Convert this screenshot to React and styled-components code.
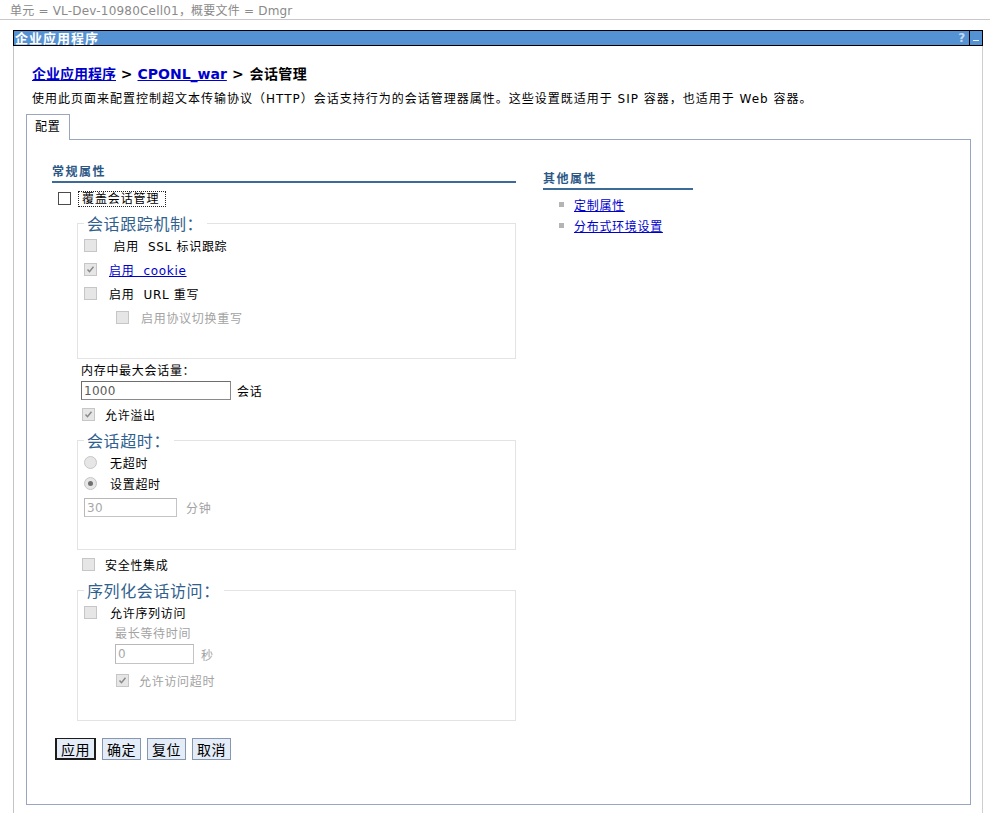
import React from 'react'
import styled, { createGlobalStyle } from 'styled-components'

const GlobalStyle = createGlobalStyle`
  body {
    margin: 0;
    background: #fff;
    color: #000;
    font-family: "DejaVu Sans", "Noto Sans CJK SC", sans-serif;
    font-size: 12px;
    letter-spacing: 0.7px;
  }
`

const TopInfo = styled.div`
  height: 16px;
  padding-top: 3px;
  line-height: 16px;
  padding-left: 10px;
  margin-right: 2px;
  color: #8a8a8a;
  letter-spacing: 0.2px;
  border-bottom: 1px solid #c8c8c8;
`

const Portlet = styled.div`
  margin: 10px 0 0 13px;
  width: 970px;
`

const TitleBar = styled.div`
  display: flex;
  align-items: stretch;
  height: 14px;
  border: 1px solid #000;
  background: #5592d3;
`

const TitleText = styled.div`
  flex: 1;
  padding-left: 1px;
  color: #fff;
  font-size: 13px;
  font-weight: bold;
  letter-spacing: 1px;
  line-height: 14px;
  font-family: "Noto Sans CJK SC", sans-serif;
`

const HelpMark = styled.div`
  width: 12px;
  color: #c6d8ee;
  font-weight: bold;
  line-height: 14px;
  text-align: center;
  margin-right: 1px;
`

const MinBox = styled.div`
  width: 12px;
  border-left: 1px solid #000;
  display: flex;
  align-items: center;
  justify-content: center;
  &::after {
    content: '';
    width: 6px;
    height: 1px;
    background: #e8f0fa;
    margin-top: 4px;
  }
`

const Body = styled.div`
  border-left: 1px solid #c4c4c4;
  border-right: 1px solid #cfcfcf;
  padding: 19px 11px 8px 12px;
`

const Crumbs = styled.div`
  padding-left: 6px;
  font-size: 14px;
  font-weight: bold;
  line-height: 18px;
  letter-spacing: 0;
  font-family: "DejaVu Sans", "Noto Sans CJK SC", sans-serif;
`

const A = styled.a`
  color: #0000cc;
  text-decoration: underline;
  cursor: pointer;
`

const CrumbTail = styled.span`
  letter-spacing: 0.4px;
`

const Desc = styled.div`
  padding-left: 6px;
  margin-top: 8px;
  line-height: 16px;
  letter-spacing: 1px;
`

const TabRow = styled.div`
  display: flex;
  margin-top: 7px;
`

const Tab = styled.div`
  height: 25px;
  line-height: 24px;
  padding: 0 9px 0 8px;
  border: 1px solid #9aa5bf;
  border-bottom: none;
  background: #fff;
  margin-bottom: -1px;
  position: relative;
  z-index: 1;
`

const Panel = styled.div`
  box-sizing: border-box;
  height: 666px;
  border: 1px solid #9aa5bf;
  padding: 24px 0 0 25px;
  display: grid;
  grid-template-columns: 464px 150px;
  column-gap: 27px;
  align-items: start;
`

const Column = styled.div`
  display: flex;
  flex-direction: column;
  margin-top: ${p => p.$offset || 0}px;
`

const SectionHead = styled.div`
  color: #2c5886;
  font-weight: bold;
  letter-spacing: 1.5px;
  line-height: 14px;
  padding-bottom: 3px;
  border-bottom: 2px solid #3d6b97;
  font-family: "Noto Sans CJK SC", sans-serif;
`

const LinkList = styled.ul`
  list-style: none;
  margin: 4px 0 0;
  padding: 0;
`

const LinkItem = styled.li`
  display: flex;
  align-items: center;
  height: 21px;
  padding-left: 16px;
  &::before {
    content: '';
    width: 5px;
    height: 5px;
    background: #b4b4b4;
    margin-right: 10px;
  }
`

const Row = styled.div`
  display: flex;
  align-items: center;
  height: ${p => p.$h || 20}px;
  margin-top: ${p => p.$mt || 0}px;
  padding-left: ${p => p.$indent || 0}px;
  gap: ${p => p.$gap || 12}px;
  color: ${p => (p.$muted ? '#a3a3a3' : '#000')};
  white-space: pre;
`

const Box = styled.span`
  box-sizing: border-box;
  width: 13px;
  height: 13px;
  flex: none;
  display: inline-flex;
  align-items: center;
  justify-content: center;
  border: 1px solid ${p => (p.$enabled ? '#4b4b4b' : '#c6c6c6')};
  background: ${p => (p.$enabled ? '#fff' : '#e6e6e6')};
  border-radius: ${p => (p.$round ? '50%' : '0')};
`

const Dot = styled.span`
  width: 5px;
  height: 5px;
  border-radius: 50%;
  background: #707070;
`

const Focused = styled.span`
  border: 1px dotted #222;
  padding: 0 6px 0 3px;
  line-height: 14px;
  letter-spacing: 0.9px;
`

const Field = styled.fieldset`
  margin: 7px 0 0 25px;
  padding: 0 6px ${p => p.$pb}px 6px;
  border: 1px solid #e3e3e3;
  min-width: 0;
`

const Legend = styled.legend`
  padding: 0 4px 0 3px;
  color: #30618e;
  font-size: 16px;
  line-height: 18px;
  letter-spacing: 0.6px;
  font-family: "Noto Sans CJK SC", sans-serif;
`

const Label = styled.div`
  line-height: 16px;
  margin-top: ${p => p.$mt || 0}px;
  padding-left: ${p => p.$indent || 0}px;
  color: ${p => (p.$muted ? '#a3a3a3' : '#000')};
`

const InputRow = styled.div`
  display: flex;
  align-items: center;
  gap: ${p => p.$gap || 6}px;
  margin-top: ${p => p.$mt || 0}px;
  padding-left: ${p => p.$indent || 0}px;
  color: ${p => (p.$muted ? '#a3a3a3' : '#000')};
`

const TextBox = styled.input`
  box-sizing: border-box;
  width: ${p => p.$w}px;
  height: ${p => p.$h || 19}px;
  margin: 0;
  padding: 0 2px;
  font: inherit;
  font-size: 12px;
  letter-spacing: 0.3px;
  color: ${p => (p.disabled ? '#a8a8a8' : '#5a5a5a')};
  background: #fff;
  border: 1px solid ${p => (p.disabled ? '#c4c4c4' : '#8a8a8a')};
  border-top-color: ${p => (p.disabled ? '#b8b8b8' : '#6e6e6e')};
  border-left-color: ${p => (p.disabled ? '#b8b8b8' : '#6e6e6e')};
`

const Buttons = styled.div`
  display: flex;
  gap: 6px;
  margin: 17px 0 0 3px;
`

const Button = styled.button`
  box-sizing: border-box;
  height: 22px;
  padding: 0 4px;
  margin: 0;
  font-family: "Noto Sans CJK SC", sans-serif;
  font-size: 14px;
  line-height: 18px;
  letter-spacing: 0.5px;
  color: #000;
  background: #e4ecf7;
  border: ${p => (p.$primary ? '2px solid #1c1c1c' : '1px solid #8797b0')};
  border-top-width: 1px;
`

const Check = ({ checked, enabled, round }) => (
  <Box $enabled={enabled} $round={round}>
    {checked && !round && (
      <svg width="9" height="9" viewBox="0 0 9 9">
        <path d="M1.5 4.5 L3.5 6.7 L7.5 1.8" fill="none" stroke="#8a8a8a" strokeWidth="1.5" />
      </svg>
    )}
    {checked && round && <Dot />}
  </Box>
)

export default function App() {
  return (
    <>
      <GlobalStyle />
      <TopInfo>单元 = VL-Dev-10980Cell01，概要文件 = Dmgr</TopInfo>
      <Portlet>
        <TitleBar>
          <TitleText>企业应用程序</TitleText>
          <HelpMark>?</HelpMark>
          <MinBox />
        </TitleBar>
        <Body>
          <Crumbs>
            <A>企业应用程序</A>{'  > '}<A>CPONL_war</A><CrumbTail>{' > 会话管理'}</CrumbTail>
          </Crumbs>
          <Desc>使用此页面来配置控制超文本传输协议（HTTP）会话支持行为的会话管理器属性。这些设置既适用于 SIP 容器，也适用于 Web 容器。</Desc>
          <TabRow>
            <Tab>配置</Tab>
          </TabRow>
          <Panel>
            <Column>
              <SectionHead>常规属性</SectionHead>
              <Row $h={17} $mt={7} $indent={6} $gap={7}>
                <Check enabled />
                <Focused>覆盖会话管理</Focused>
              </Row>

              <Field $pb={29}>
                <Legend>会话跟踪机制：</Legend>
                <Row $h={24} $mt={1}>
                  <Check />
                  <span> 启用  SSL 标识跟踪</span>
                </Row>
                <Row $h={24}>
                  <Check checked />
                  <A>启用  cookie</A>
                </Row>
                <Row $h={24}>
                  <Check />
                  <span>启用  URL 重写</span>
                </Row>
                <Row $h={24} $indent={32} $muted>
                  <Check />
                  <span>启用协议切换重写</span>
                </Row>
              </Field>

              <Label $mt={4} $indent={29}>内存中最大会话量：</Label>
              <InputRow $mt={2} $indent={29}>
                <TextBox $w={150} defaultValue="1000" />
                <span>会话</span>
              </InputRow>
              <Row $mt={4} $indent={30} $gap={10}>
                <Check checked />
                <span>允许溢出</span>
              </Row>

              <Field $pb={32}>
                <Legend>会话超时：</Legend>
                <Row $h={21} $mt={3} $gap={13}>
                  <Check round />
                  <span>无超时</span>
                </Row>
                <Row $h={21} $gap={13}>
                  <Check round checked />
                  <span>设置超时</span>
                </Row>
                <InputRow $mt={4} $gap={9} $muted>
                  <TextBox $w={93} defaultValue="30" disabled />
                  <span>分钟</span>
                </InputRow>
              </Field>

              <Row $mt={4} $indent={30} $gap={10}>
                <Check />
                <span>安全性集成</span>
              </Row>

              <Field $pb={30}>
                <Legend>序列化会话访问：</Legend>
                <Row $mt={3} $gap={13}>
                  <Check />
                  <span>允许序列访问</span>
                </Row>
                <Label $mt={4} $indent={31} $muted>最长等待时间</Label>
                <InputRow $mt={2} $indent={31} $gap={7} $muted>
                  <TextBox $w={79} $h={20} defaultValue="0" disabled />
                  <span>秒</span>
                </InputRow>
                <Row $mt={6} $indent={32} $gap={10} $muted>
                  <Check checked />
                  <span>允许访问超时</span>
                </Row>
              </Field>

              <Buttons>
                <Button $primary>应用</Button>
                <Button>确定</Button>
                <Button>复位</Button>
                <Button>取消</Button>
              </Buttons>
            </Column>

            <Column $offset={7}>
              <SectionHead>其他属性</SectionHead>
              <LinkList>
                <LinkItem><A>定制属性</A></LinkItem>
                <LinkItem><A>分布式环境设置</A></LinkItem>
              </LinkList>
            </Column>
          </Panel>
        </Body>
      </Portlet>
    </>
  )
}
